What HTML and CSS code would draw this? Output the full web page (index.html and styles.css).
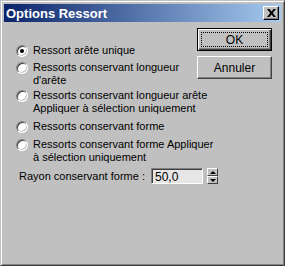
FILE: index.html
```html
<!DOCTYPE html>
<html lang="fr">
<head>
  <meta charset="UTF-8">
  <title>Options Ressort</title>
  <link rel="stylesheet" href="styles.css">
</head>
<body>
  <div class="window">
    <div class="titlebar">
      <span class="title">Options Ressort</span>
      <span class="close">
        <svg width="9" height="8" viewBox="0 0 9 8"><path d="M0 0h2.5l2 2.5 2-2.5H9L5.8 4 9 8H6.5l-2-2.5-2 2.5H0l3.2-4z" fill="#000"/></svg>
      </span>
    </div>
    <div class="content">
      <div class="options">
        <div class="opt opt1">
          <span class="radio checked"></span>
          <span class="label">Ressort arête unique</span>
        </div>
        <div class="opt opt2">
          <span class="radio"></span>
          <span class="label">Ressorts conservant longueur<br>d'arête</span>
        </div>
        <div class="opt opt3">
          <span class="radio"></span>
          <span class="label">Ressorts conservant longueur arête<br>Appliquer à sélection uniquement</span>
        </div>
        <div class="opt opt4">
          <span class="radio"></span>
          <span class="label">Ressorts conservant forme</span>
        </div>
        <div class="opt opt5">
          <span class="radio"></span>
          <span class="label">Ressorts conservant forme Appliquer<br>à sélection uniquement</span>
        </div>
        <div class="rayon">
          <span class="rlabel">Rayon conservant forme :</span>
          <span class="field">50,0</span>
          <span class="spinner">
            <span class="arrow up"></span>
            <span class="arrow down"></span>
          </span>
        </div>
      </div>
      <div class="buttons">
        <div class="btn default"><span class="focus">OK</span></div>
        <div class="btn">Annuler</div>
      </div>
    </div>
  </div>
</body>
</html>
```

FILE: styles.css
```css
body {
  margin: 0;
  font-family: "Liberation Sans", Arial, sans-serif;
  font-size: 11px;
  color: #000;
}
.window {
  width: 285px;
  height: 266px;
  box-sizing: border-box;
  background: #c0c0c0;
  border: 1px solid;
  border-color: #c0c0c0 #404040 #404040 #c0c0c0;
  box-shadow: inset 1px 1px #fff, inset -1px -1px #808080;
  padding: 3px;
}
.titlebar {
  height: 18px;
  background: linear-gradient(90deg, #0a246a, #a6caf0);
  display: flex;
  align-items: center;
  justify-content: space-between;
  padding: 0 2px 0 2px;
}
.title {
  color: #fff;
  font-weight: bold;
  font-size: 13px;
}
.close {
  width: 16px;
  height: 14px;
  box-sizing: border-box;
  background: #c0c0c0;
  border: 1px solid;
  border-color: #fff #000 #000 #fff;
  box-shadow: inset -1px -1px #808080;
  display: flex;
  align-items: center;
  justify-content: center;
}
.content {
  display: flex;
  justify-content: space-between;
  padding: 6px 9px 0 12px;
}
.options {
  flex: 1 1 0;
  min-width: 0;
  padding-top: 16px;
  display: flex;
  flex-direction: column;
}
.opt {
  display: flex;
  align-items: flex-start;
  line-height: 13px;
}
.opt2 { margin-top: 4px; }
.opt3 { margin-top: 2px; }
.opt4 { margin-top: 5px; }
.opt5 { margin-top: 5px; }
.radio {
  width: 12px;
  height: 12px;
  box-sizing: border-box;
  border-radius: 50%;
  background: #fff;
  border: 1px solid;
  border-color: #808080 #fff #fff #808080;
  box-shadow: inset 1px 1px #404040, inset -1px -1px #c0c0c0;
  margin-top: 1px;
  margin-right: 5px;
  flex: none;
  display: flex;
  align-items: center;
  justify-content: center;
}
.radio.checked::after {
  content: "";
  width: 4px;
  height: 4px;
  border-radius: 50%;
  background: #000;
}
.label {
  white-space: nowrap;
}
.rayon {
  display: flex;
  align-items: center;
  margin-top: 4px;
  padding-left: 3px;
}
.rlabel {
  width: 132px;
  flex: none;
  white-space: nowrap;
}
.field {
  width: 52px;
  height: 16px;
  flex: none;
  box-sizing: border-box;
  background: #e6e6e6;
  border: 1px solid;
  border-color: #808080 #fff #fff #808080;
  box-shadow: inset 1px 1px #404040;
  padding: 2px 0 0 3px;
  font-size: 12px;
  line-height: 12px;
}
.spinner {
  margin-left: 4px;
  width: 11px;
  height: 16px;
  flex: none;
  display: flex;
  flex-direction: column;
}
.arrow {
  flex: 1;
  box-sizing: border-box;
  background: #c0c0c0;
  border: 1px solid;
  border-color: #fff #404040 #404040 #fff;
  display: flex;
  align-items: center;
  justify-content: center;
}
.arrow::after {
  content: "";
  border-left: 3px solid transparent;
  border-right: 3px solid transparent;
}
.up::after { border-bottom: 3px solid #000; }
.down::after { border-top: 3px solid #000; }
.buttons {
  flex: none;
  display: flex;
  flex-direction: column;
  gap: 5px;
}
.btn {
  width: 75px;
  height: 23px;
  box-sizing: border-box;
  border: 1px solid;
  border-color: #fff #404040 #404040 #fff;
  box-shadow: inset -1px -1px #808080;
  display: flex;
  align-items: center;
  justify-content: center;
  font-size: 12px;
}
.btn.default {
  border: 1px solid #000;
  box-shadow: inset 1px 1px #fff, inset -1px -1px #404040, inset -2px -2px #808080;
  padding: 3px;
}
.focus {
  flex: 1;
  align-self: stretch;
  border: 1px dotted #000;
  display: flex;
  align-items: center;
  justify-content: center;
}
```
